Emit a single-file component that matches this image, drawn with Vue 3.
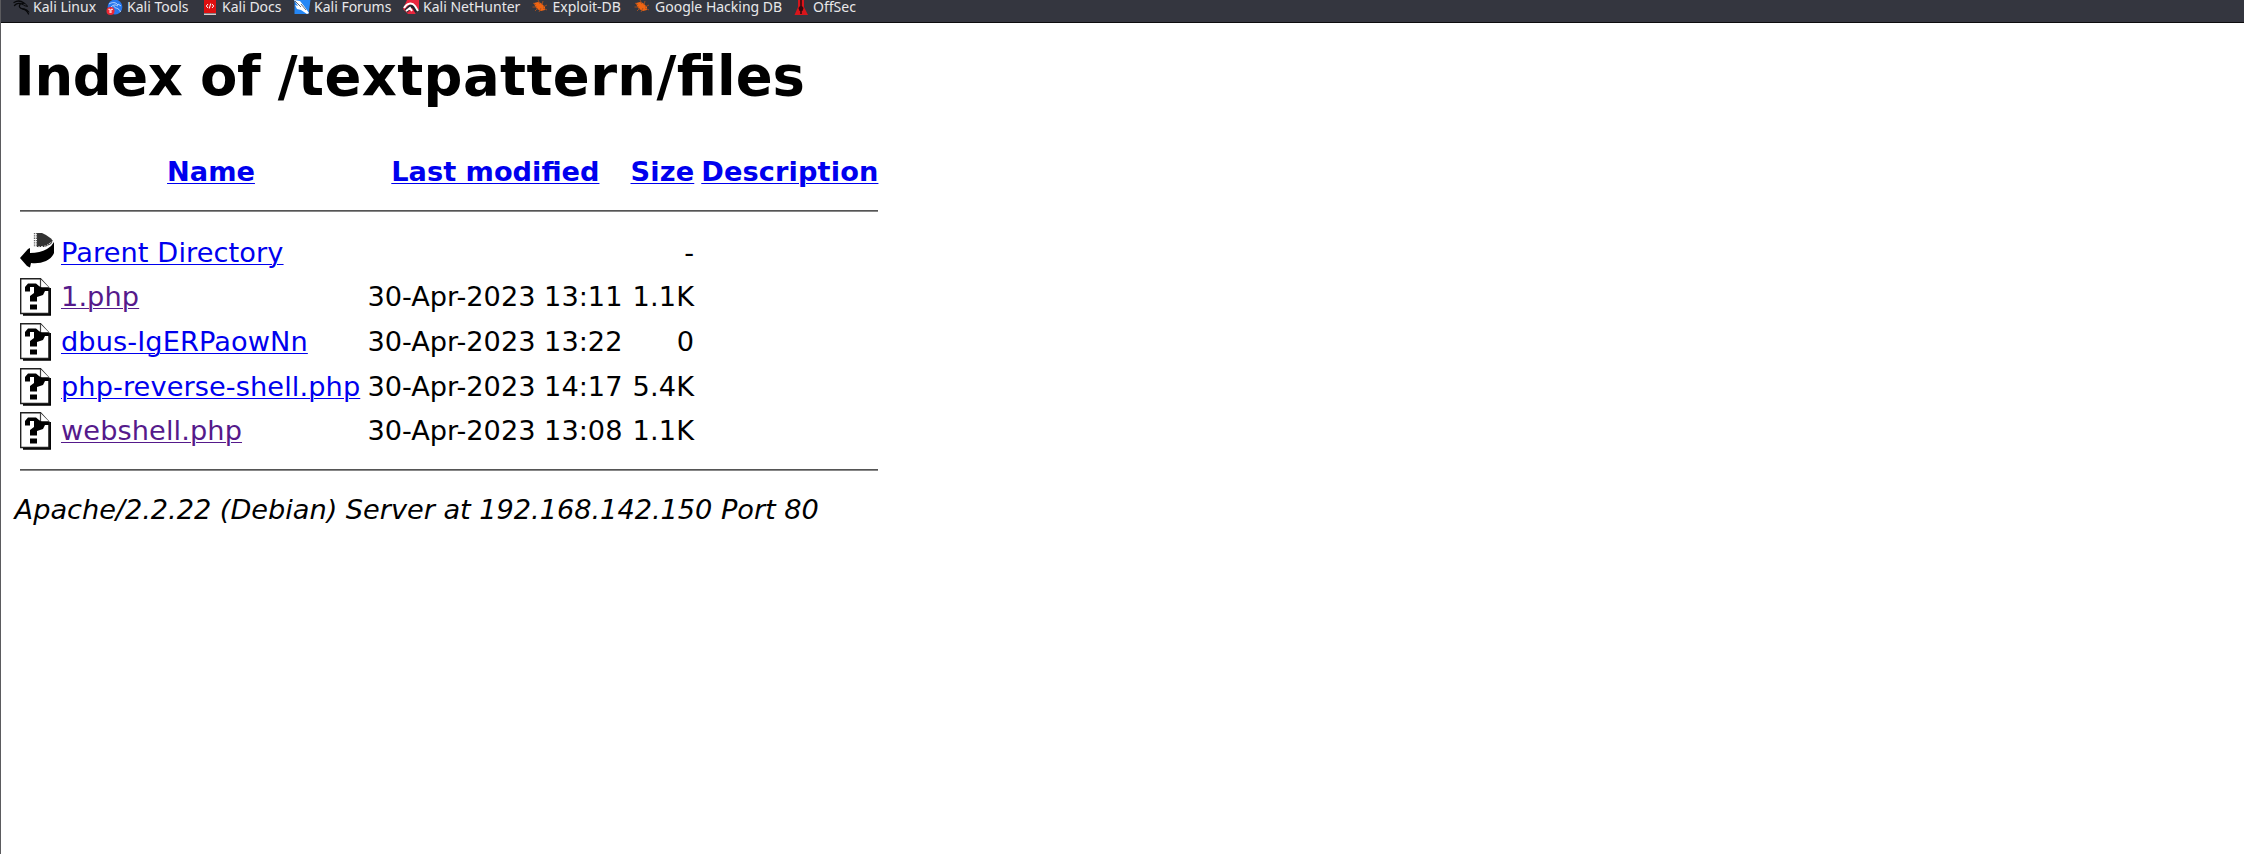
<script setup>
const bookmarks = [
  { label: 'Kali Linux', icon: 'dragon', width: 94 },
  { label: 'Kali Tools', icon: 'tools', width: 95 },
  { label: 'Kali Docs', icon: 'docs', width: 92 },
  { label: 'Kali Forums', icon: 'forums', width: 109 },
  { label: 'Kali NetHunter', icon: 'nethunter', width: 129.5 },
  { label: 'Exploit-DB', icon: 'bug', width: 102.5 },
  { label: 'Google Hacking DB', icon: 'bug', width: 158 },
  { label: 'OffSec', icon: 'offsec', width: 70 },
]
const files = [
  { name: 'Parent Directory', date: '', size: '-', parent: true },
  { name: '1.php', date: '30-Apr-2023 13:11', size: '1.1K', visited: true },
  { name: 'dbus-IgERPaowNn', date: '30-Apr-2023 13:22', size: '0' },
  { name: 'php-reverse-shell.php', date: '30-Apr-2023 14:17', size: '5.4K' },
  { name: 'webshell.php', date: '30-Apr-2023 13:08', size: '1.1K', visited: true },
]
</script>

<template>
  <div class="window">
    <nav class="bookmarks">
      <a v-for="b in bookmarks" :key="b.label" class="bookmark" :style="{ width: b.width + 'px' }">
        <svg class="favicon" viewBox="0 0 18 16">
          <g v-if="b.icon === 'dragon'" fill="none" stroke="#08090b" stroke-linecap="round">
            <path d="M2 2.500C5 .5 9 .8 12 3M2.500 5.500C5 2.500 8 3 11 4.500M9 3.500C6 6 7.500 8.500 11 9C14.500 9.500 15.500 11.500 16.500 14" stroke-width="1.300" />
            <path d="M10 3.500C13 3 14.500 4 15.500 6.500L12 5.500M11 9C14 9 16 10 17 12" stroke-width="1" />
          </g>
          <g v-else-if="b.icon === 'tools'">
            <circle cx="9" cy="7" r="7.400" fill="#2777ed" />
            <path d="M3 4C6 2 10 2 12 5M5 7C8 4 10 5 12 6M8 6C8 9 13 7 14.500 12M12 4L15 6" fill="none" stroke="#b9d6ff" stroke-width="1" />
            <circle cx="4.500" cy="11" r="4" fill="#ed2834" />
            <path d="M2.300 9.300H4V13M5 13V9.300H7" fill="none" stroke="#fff" stroke-width=".9" />
          </g>
          <g v-else-if="b.icon === 'docs'">
            <path d="M3 0H15V13H3Z" fill="#df1010" />
            <path d="M3 13.500H15V15H3Z" fill="#d9cccc" />
            <path d="M7 4L5.300 6L7 8M11 4L12.700 6L11 8M9.700 3.500L8.300 8.500" fill="none" stroke="#fff" stroke-width="1" />
          </g>
          <g v-else-if="b.icon === 'forums'">
            <path d="M1.500 0H17.500L15.500 14H1.500Z" fill="#2587f5" />
            <path d="M1 0L7 1L11 6L16 13L14 14L8 10L4 9L2 5L5 6Z" fill="#fff" />
            <path d="M2 1L8 7M8 4L13 10" stroke="#35445c" stroke-width=".8" />
          </g>
          <g v-else-if="b.icon === 'nethunter'">
            <path d="M5 0H17V9L13 14H6L1 9Z" fill="#e7263d" />
            <path d="M4 11L8 7Q10 5 12 7L15 12" fill="none" stroke="#20222a" stroke-width="4" />
            <path d="M2 8C5 3 10 2 13 6L16 11M4 11L8 8L10 11" fill="none" stroke="#fff" stroke-width="2" />
          </g>
          <g v-else-if="b.icon === 'bug'">
            <path d="M2 3L6 2L9 3L13 7L13 10L9 11L5 9L3 6Z" fill="#f06412" />
            <path d="M1 3L4 5M.5 7H5M3 11L6 8M7 12L9 8M6 0L8 4M11 1L10 5M15 5L11 7M15 10L11 8" stroke="#a8501f" stroke-width=".9" />
          </g>
          <g v-else>
            <path d="M6 0H12V7L16 15H2.500L6 7Z" fill="#d9151b" />
            <path d="M9 0V14" stroke="#28090d" stroke-width="1.500" />
            <path d="M6.500 8L8 6H10L11.500 8L10.500 11H7.500Z" fill="#330b10" />
          </g>
        </svg>
        <span>{{ b.label }}</span>
      </a>
    </nav>

    <main class="listing">
      <h1><span class="lead">Index of </span><span class="path">/textpattern/</span>files</h1>
      <div class="row head">
        <span></span>
        <b class="center"><a>Name</a></b>
        <b class="center"><a>Last modified</a></b>
        <b class="right"><a>Size</a></b>
        <b class="description"><a>Description</a></b>
      </div>
      <div class="rule"></div>
      <div class="files">
        <div v-for="f in files" :key="f.name" class="row">
          <svg v-if="f.parent" class="icon back" viewBox="0 0 34 38">
            <path d="M17 1H22L26 3L31 6.500L33 9L31 12L25 15H17Z" fill="#333" />
            <path d="M14.500 1V15M16.500 1V15" stroke="#666" stroke-width="1.300" stroke-dasharray="1.300 1" />
            <path d="M18 15L26 14L33 9" fill="none" stroke="#ddd" stroke-width="1" stroke-dasharray="2 1" />
            <path d="M34 10V21Q32 26 26 29Q19 32 11 31L10 35.500L7 34L0 26L8 17L10 16V21Q20 21 27 17Q32 14 34 10Z" fill="#000" />
          </svg>
          <svg v-else class="icon" viewBox="0 0 34 38">
            <path d="M3 36.800H30V10" fill="none" stroke="#000" stroke-width="2" />
            <path d="M.7 .7H20.500L29 10V35.500H.7Z" fill="#fff" stroke="#222" stroke-width="1.400" />
            <path d="M20.500 1V9.500H29" fill="#fff" stroke="#444" stroke-width="1.200" />
            <path d="M5 13.500V9L8 5.500H16L19 8L22 10H30V13H25L23 17L17 19V23.500H10V18L14 15V9H10V13.500Z" fill="#000" />
            <path d="M10 26.500H17V31.500H10Z" fill="#000" />
            <path d="M29.500 10V36" stroke="#111" stroke-width="1.600" />
          </svg>
          <span class="name"><a :class="{ visited: f.visited }">{{ f.name }}</a></span>
          <span>{{ f.date }}</span>
          <span class="right">{{ f.size }}</span>
          <span></span>
        </div>
      </div>
      <div class="rule"></div>
      <address>Apache/2.2.22 (Debian) Server at 192.168.142.150 Port 80</address>
    </main>
  </div>
</template>

<style>
body { margin: 0; background: #fff; }
</style>

<style scoped>
.window {
  box-sizing: border-box;
  height: 854px;
  overflow: hidden;
  border-left: 1px solid #5b5b5e;
  background: #fff;
  color: #000;
  font-family: "DejaVu Sans", sans-serif;
}
.bookmarks {
  box-sizing: border-box;
  display: flex;
  height: 23px;
  padding-left: 11px;
  background: #34363f;
  border-bottom: 1px solid #0c0c0d;
  font: 14px/14px "Noto Sans", sans-serif;
}
.bookmark { display: flex; flex: none; white-space: nowrap; color: #e8e8ea; }
.favicon { flex: none; width: 18px; height: 16px; margin-right: 3px; }
.listing { padding-left: 13.600px; font-size: 27.200px; line-height: 32px; }
h1 { margin: 23px 0 0; font-size: 54.400px; line-height: 62px; white-space: nowrap; }
.lead { letter-spacing: -.4px; word-spacing: -1px; }
.path { letter-spacing: .4px; }
.row {
  display: grid;
  grid-template-columns: 41px 306.400px 255.900px 71px 184px;
  align-items: center;
  height: 44.600px;
  margin-left: 5.400px;
  white-space: nowrap;
}
.head { height: 32px; margin-top: 48px; }
.name { letter-spacing: .1px; }
.center { width: 300px; text-align: center; }
.center + .center { width: 256px; }
.right { text-align: right; letter-spacing: .15px; }
.description { padding-left: 7px; letter-spacing: .12px; }
.listing a { color: #0000ee; text-decoration: underline; text-decoration-thickness: 1px; text-underline-offset: 2px; }
.listing a.visited { color: #551a8b; }
.rule {
  box-sizing: border-box;
  width: 858px;
  height: 2px;
  margin: 22px 0 0 5.400px;
  border-top: 1px solid #555;
  border-bottom: 1px solid #888;
}
.files { padding-top: 18.500px; }
.files + .rule { margin-top: 15.500px; }
.icon { width: 34px; height: 38px; }
.back { margin-top: -3px; }
address { margin-top: 23px; font-style: italic; letter-spacing: -.03px; }
</style>
